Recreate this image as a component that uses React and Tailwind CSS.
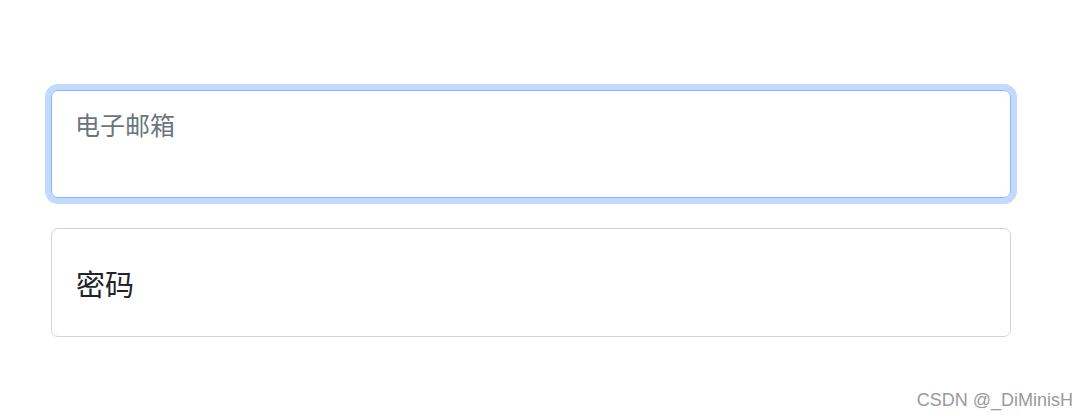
export default function App() {
  return (
    <div className="relative w-full h-[419px] bg-white font-['Noto_Sans_CJK_SC','Noto_Sans',sans-serif]">
      <div className="pl-[51px] pt-[90px] w-[1011px] flex flex-col gap-[30px]">
        {/* Email, focused */}
        <div className="h-[108px] border border-[#86b7fe] rounded-[7px] shadow-[0_0_0_6px_#c3dafe] px-[23px] pt-[15px]">
          <span className="text-[25px] leading-[36px] text-[#6c757d]">电子邮箱</span>
        </div>
        {/* Password */}
        <div className="h-[109px] border border-[#ced4da] rounded-[7px] px-[24px] flex items-center">
          <span className="text-[29px] leading-[36px] text-[#212529]">密码</span>
        </div>
      </div>
      <div className="absolute right-[15px] bottom-[9px] text-[18px] leading-[20px] text-[#9a9a9a] font-['Liberation_Sans',sans-serif]">
        CSDN @_DiMinisH
      </div>
    </div>
  );
}
